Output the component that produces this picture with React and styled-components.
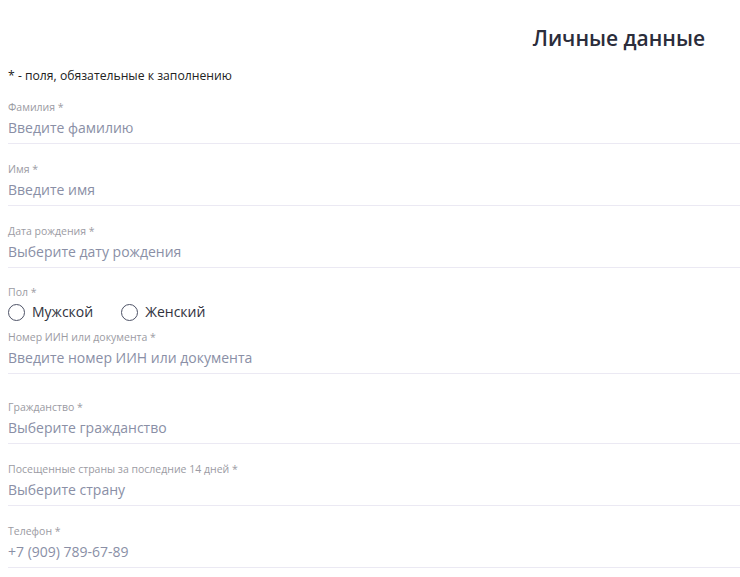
import styled, { createGlobalStyle } from 'styled-components'

const GlobalStyle = createGlobalStyle`
  body {
    margin: 0;
    background: #ffffff;
    font-family: 'Open Sans', 'Noto Sans', sans-serif;
  }
`

const Page = styled.div`
  padding: 25px 0 0 8px;
  overflow: hidden;
`

const TitleRow = styled.div`
  display: flex;
  justify-content: flex-end;
  padding-right: 35px;
`

const Title = styled.h1`
  margin: 0;
  font-size: 21px;
  line-height: 26px;
  font-weight: 600;
  color: #2b2d3b;
`

const Hint = styled.p`
  margin: 16px 0 15px;
  font-size: 12.2px;
  line-height: 18px;
  color: #222222;
`

const Form = styled.form`
  display: flex;
  flex-direction: column;
`

const Field = styled.label`
  display: flex;
  flex-direction: column;
  padding-bottom: 4px;
  border-bottom: 1px solid #ebe9f3;
  margin-bottom: ${p => p.$extra ? 26 : 18}px;
`

const Label = styled.span`
  font-size: 10.5px;
  line-height: 14px;
  color: #9b9ba3;
`

const Input = styled.input`
  margin-top: 3px;
  border: none;
  padding: 0;
  outline: none;
  font-family: 'Open Sans', 'Noto Sans', sans-serif;
  font-size: 14px;
  line-height: 22px;
  height: 22px;
  color: #555a6e;
  background: transparent;
  &::placeholder { color: #8a8fa6; }
`

const Group = styled.div`
  display: flex;
  flex-direction: column;
  margin-top: -1px;
`

const Radios = styled.div`
  display: flex;
  gap: 28px;
  margin: 2px 0 7px;
`

const Radio = styled.label`
  display: flex;
  align-items: center;
  gap: 7px;
  font-size: 14px;
  line-height: 22px;
  color: #30323d;
  cursor: pointer;
`

const Circle = styled.span`
  width: 15px;
  height: 15px;
  border: 1px solid #4d5266;
  border-radius: 50%;
`

const fields = [
  { label: 'Фамилия *', placeholder: 'Введите фамилию' },
  { label: 'Имя *', placeholder: 'Введите имя' },
  { label: 'Дата рождения *', placeholder: 'Выберите дату рождения' },
]

const rest = [
  { label: 'Гражданство *', placeholder: 'Выберите гражданство' },
  { label: 'Посещенные страны за последние 14 дней *', placeholder: 'Выберите страну' },
  { label: 'Телефон *', placeholder: '+7 (909) 789-67-89' },
]

export default function App() {
  return (
    <>
      <GlobalStyle />
      <Page>
        <TitleRow>
          <Title>Личные данные</Title>
        </TitleRow>
        <Hint>* - поля, обязательные к заполнению</Hint>
        <Form>
          {fields.map(f => (
            <Field key={f.label}>
              <Label>{f.label}</Label>
              <Input placeholder={f.placeholder} />
            </Field>
          ))}
          <Group>
            <Label>Пол *</Label>
            <Radios>
              <Radio><Circle />Мужской</Radio>
              <Radio><Circle />Женский</Radio>
            </Radios>
          </Group>
          <Field $extra>
            <Label>Номер ИИН или документа *</Label>
            <Input placeholder="Введите номер ИИН или документа" />
          </Field>
          {rest.map(f => (
            <Field key={f.label}>
              <Label>{f.label}</Label>
              <Input placeholder={f.placeholder} />
            </Field>
          ))}
        </Form>
      </Page>
    </>
  )
}
